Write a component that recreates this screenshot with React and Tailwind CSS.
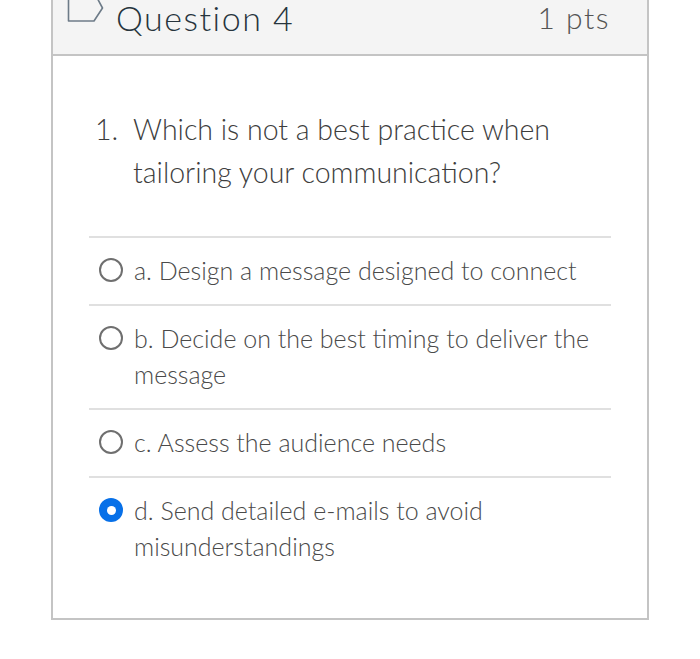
import React from "react";

const options = [
  { label: "a. Design a message designed to connect", selected: false },
  { label: "b. Decide on the best timing to deliver the message", selected: false },
  { label: "c. Assess the audience needs", selected: false },
  { label: "d. Send detailed e-mails to avoid misunderstandings", selected: true },
];

function Radio({ selected }) {
  if (selected) {
    return (
      <span className="mt-[6px] flex h-[24px] w-[24px] shrink-0 items-center justify-center rounded-full bg-[#0770e8]">
        <span className="h-[9px] w-[9px] rounded-full bg-white" />
      </span>
    );
  }
  return (
    <span className="mt-[6px] block h-[24px] w-[24px] shrink-0 rounded-full border-[2px] border-[#6f6f6f] bg-white" />
  );
}

export default function App() {
  return (
    <div className="h-[659px] w-[700px] bg-white font-['Lato','Open_Sans',sans-serif] font-light">
      <div className="ml-[51px] w-[598px] border-x-[2px] border-b-[2px] border-[#c4c4c4] pb-[38px]">
        <div className="relative flex h-[56px] items-start justify-between border-b-[2px] border-[#c4c4c4] bg-[#f4f4f4] pl-[14px] pr-[37px]">
          <div className="flex items-start">
            <svg width="40" height="24" viewBox="0 0 40 24" fill="none">
              <path d="M1.5 -6 V21 H27 L35.5 8 L28 -6" stroke="#6d7b88" strokeWidth="1.6" strokeLinejoin="round" />
            </svg>
            <span className="ml-[9px] text-[34px] leading-[35px] tracking-[1.5px] text-[#27343d]">Question 4</span>
          </div>
          <span className="text-[30px] leading-[35px] tracking-[1.5px] text-[#555555]">1 pts</span>
        </div>
        <div className="px-[36px] pt-[52px]">
          <div className="flex pl-[6px] pr-[10px] text-[28.5px] leading-[43px] text-[#3d3d3d]">
            <span className="w-[38px] shrink-0">1.</span>
            <span>Which is not a best practice when tailoring your communication?</span>
          </div>
          <div className="mt-[42px]">
            {options.map((o, i) => (
              <div
                key={i}
                className="flex gap-[11px] border-t-[2px] border-[#e0e0e0] pl-[10px] pr-[10px] pt-[14px] pb-[16px]"
              >
                <Radio selected={o.selected} />
                <span className="text-[25px] leading-[36px] text-[#4a4a4a]">{o.label}</span>
              </div>
            ))}
          </div>
        </div>
      </div>
    </div>
  );
}
